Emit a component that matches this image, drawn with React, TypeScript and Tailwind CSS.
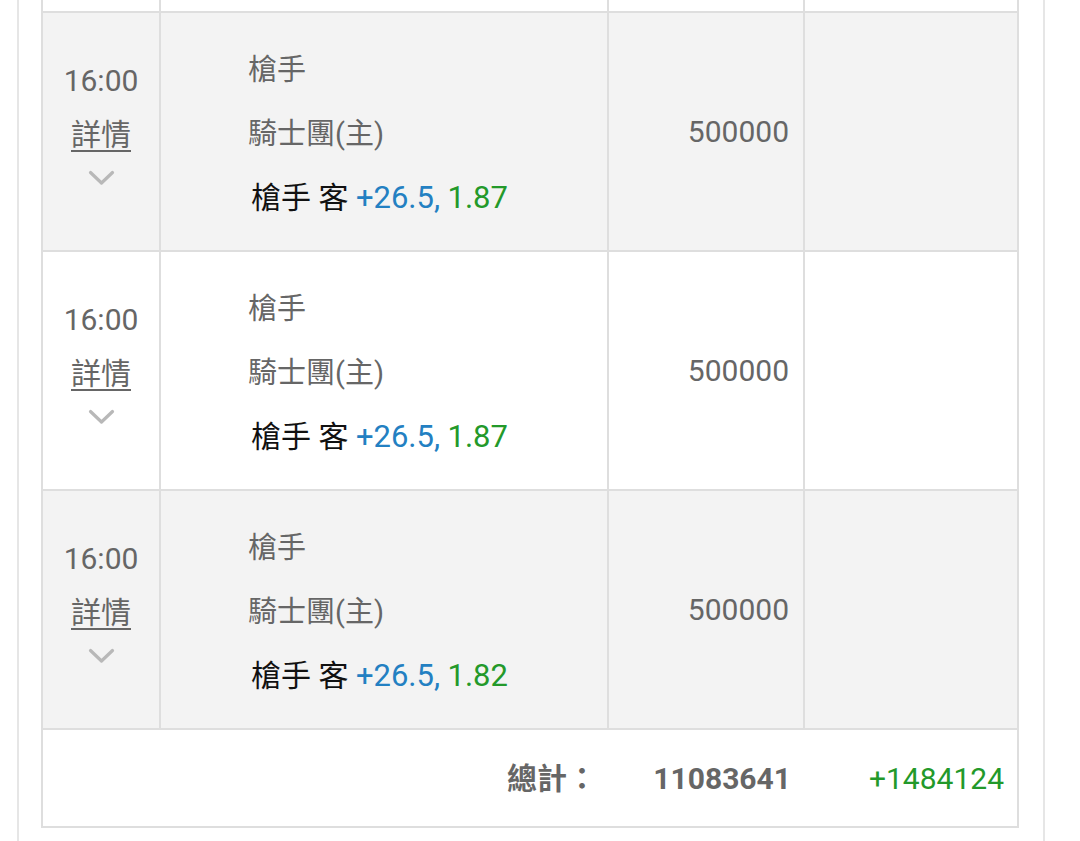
import React from "react";

type Bet = {
  time: string;
  away: string;
  home: string;
  pick: string;
  line: string;
  odds: string;
  stake: string;
  shaded: boolean;
};

const BETS: Bet[] = [
  { time: "16:00", away: "槍手", home: "騎士團(主)", pick: "槍手 客", line: "+26.5,", odds: "1.87", stake: "500000", shaded: true },
  { time: "16:00", away: "槍手", home: "騎士團(主)", pick: "槍手 客", line: "+26.5,", odds: "1.87", stake: "500000", shaded: false },
  { time: "16:00", away: "槍手", home: "騎士團(主)", pick: "槍手 客", line: "+26.5,", odds: "1.82", stake: "500000", shaded: true },
];

function Chevron() {
  return (
    <svg width="27" height="16" viewBox="0 0 27 16" fill="none">
      <polyline
        points="2.5,2.5 13.5,13 24.5,2.5"
        stroke="#b8b8b8"
        strokeWidth="3.2"
        strokeLinecap="round"
        strokeLinejoin="round"
      />
    </svg>
  );
}

function BetRow({ bet }: { bet: Bet }) {
  return (
    <div
      className={`flex h-[239px] border-b-2 border-[#dedede] ${
        bet.shaded ? "bg-[#f3f3f3]" : "bg-white"
      }`}
    >
      {/* time + details */}
      <div className="w-[118px] shrink-0 border-r-2 border-[#dedede] flex flex-col items-center pt-[41px] text-[#666]">
        <div className="leading-[54px]">{bet.time}</div>
        <div className="leading-[54px] underline underline-offset-[5px] decoration-[1.5px]">
          詳情
        </div>
        <div className="mt-[8px]">
          <Chevron />
        </div>
      </div>

      {/* match */}
      <div className="w-[448px] shrink-0 border-r-2 border-[#dedede] pl-[87px] pt-[25px]">
        <div className="leading-[64px] text-[29px] text-[#666]">{bet.away}</div>
        <div className="leading-[64px] text-[29px] text-[#666]">{bet.home}</div>
        <div className="leading-[64px] ml-[3px] text-[#111] whitespace-nowrap">
          {bet.pick}{" "}
          <span className="text-[31px] text-[#2380c2]">{bet.line}</span>{" "}
          <span className="text-[31px] text-[#23992a]">{bet.odds}</span>
        </div>
      </div>

      {/* stake */}
      <div className="w-[196px] shrink-0 border-r-2 border-[#dedede] flex items-center justify-end pr-[14px] text-[#666]">
        {bet.stake}
      </div>

      {/* result */}
      <div className="flex-1" />
    </div>
  );
}

export default function App() {
  return (
    <div
      className="w-[1080px] h-[841px] overflow-hidden bg-white text-[30px]"
      style={{ fontFamily: 'Roboto, "Noto Sans CJK TC", sans-serif' }}
    >
      <div className="ml-[17px] w-[1028px] h-full border-x-2 border-[#e6e6e6] pl-[22px]">
        <div className="w-[978px] border-x-2 border-[#dedede]">
          {/* clipped row above */}
          <div className="flex h-[13px] border-b-2 border-[#dedede] bg-white">
            <div className="w-[118px] shrink-0 border-r-2 border-[#dedede]" />
            <div className="w-[448px] shrink-0 border-r-2 border-[#dedede]" />
            <div className="w-[196px] shrink-0 border-r-2 border-[#dedede]" />
            <div className="flex-1" />
          </div>

          {BETS.map((b, i) => (
            <BetRow key={i} bet={b} />
          ))}

          {/* total */}
          <div className="flex h-[98px] border-b-2 border-[#dedede] bg-white items-center">
            <div className="w-[566px] shrink-0 flex justify-end pr-[12px] font-bold text-[#666]">
              總計：
            </div>
            <div className="w-[196px] shrink-0 flex justify-end pr-[14px] font-bold text-[#666]">
              11083641
            </div>
            <div className="flex-1 flex justify-end pr-[13px] text-[#23992a]">
              +1484124
            </div>
          </div>
        </div>
      </div>
    </div>
  );
}
